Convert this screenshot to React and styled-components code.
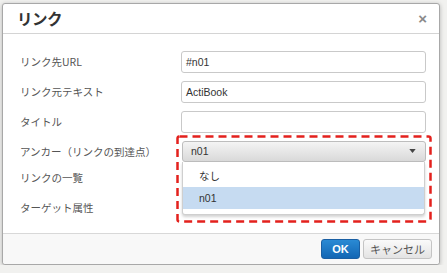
import styled, { createGlobalStyle } from "styled-components";

const GlobalStyle = createGlobalStyle`
  html, body {
    margin: 0;
    padding: 0;
    background: #f1f1ef;
  }
  body {
    font-family: "Liberation Sans", "Noto Sans CJK JP", sans-serif;
  }
`;

function App() {
  return (
    <>
      <GlobalStyle />
      <Dialog>
        <Header>
          <Title>リンク</Title>
          <Close>×</Close>
        </Header>
        <Body>
          <Row>
            <Label>リンク先URL</Label>
            <TextInput>#n01</TextInput>
          </Row>
          <Row>
            <Label>リンク元テキスト</Label>
            <TextInput>ActiBook</TextInput>
          </Row>
          <Row>
            <Label>タイトル</Label>
            <TextInput />
          </Row>
          <Row>
            <Label>アンカー（リンクの到達点）</Label>
            <SelectWrap>
              <Select>
                n01
                <Caret viewBox="0 0 8 5" width="7" height="4">
                  <path d="M0 0 L8 0 L4 5 Z" fill="#444" />
                </Caret>
              </Select>
              <Menu>
                <Option>なし</Option>
                <Option $active>n01</Option>
              </Menu>
              <Highlight width="256" height="88" viewBox="0 0 256 88">
                <rect
                  x="1.5"
                  y="1.5"
                  width="253"
                  height="85"
                  rx="2"
                  fill="none"
                  stroke="#e3211d"
                  strokeWidth="2.5"
                  strokeDasharray="8 5"
                />
              </Highlight>
            </SelectWrap>
          </Row>
          <Row $top>
            <Label $top>リンクの一覧</Label>
            <Blank />
          </Row>
          <Row $top>
            <Label $top>ターゲット属性</Label>
            <Blank />
          </Row>
        </Body>
        <Footer>
          <Button $primary>OK</Button>
          <Button>キャンセル</Button>
        </Footer>
      </Dialog>
    </>
  );
}

const Dialog = styled.div`
  box-sizing: border-box;
  width: 438px;
  height: 262px;
  margin: 3px 0 0 2px;
  background: #fff;
  border: 1px solid #a8a8a8;
  border-radius: 3px;
  box-shadow: 0 1px 4px rgba(0, 0, 0, 0.25);
  display: flex;
  flex-direction: column;
`;

const Header = styled.div`
  height: 29px;
  padding: 0 12px 0 14px;
  display: flex;
  align-items: center;
  justify-content: space-between;
  border-bottom: 1px solid #d4d4d4;
`;

const Title = styled.div`
  font-family: "Noto Sans CJK JP", sans-serif;
  font-size: 15.5px;
  font-weight: 700;
  color: #333;
  letter-spacing: -0.5px;
`;

const Close = styled.div`
  font-family: "Liberation Sans", sans-serif;
  font-size: 15px;
  font-weight: 700;
  color: #8a8a8a;
  line-height: 1;
`;

const Body = styled.div`
  flex: 1;
  padding: 17px 13px 0 17px;
  display: flex;
  flex-direction: column;
  gap: 8px;
`;

const Row = styled.div`
  display: grid;
  grid-template-columns: 161px 1fr;
  align-items: ${(p) => (p.$top ? "start" : "center")};
  height: 22px;
`;

const Label = styled.div`
  font-family: "Noto Sans CJK JP", sans-serif;
  font-size: 10.5px;
  line-height: ${(p) => (p.$top ? "13px" : "16px")};
  color: #555;
  white-space: nowrap;
`;

const TextInput = styled.div`
  box-sizing: border-box;
  height: 22px;
  border: 1px solid #c9c9c9;
  border-radius: 3px;
  padding: 0 4px;
  font-family: "Liberation Sans", sans-serif;
  font-size: 10.5px;
  line-height: 20px;
  color: #333;
  background: #fff;
`;

const SelectWrap = styled.div`
  position: relative;
  height: 22px;
`;

const Select = styled.div`
  box-sizing: border-box;
  height: 21px;
  margin-left: 1px;
  border: 1px solid #bdbdbd;
  border-radius: 3px;
  background: linear-gradient(#f4f4f4, #d9d9d9);
  padding: 0 9px 0 8px;
  display: flex;
  align-items: center;
  justify-content: space-between;
  font-family: "Liberation Sans", sans-serif;
  font-size: 10.5px;
  color: #333;
`;

const Caret = styled.svg`
  display: block;
`;

const Menu = styled.div`
  position: absolute;
  top: 21px;
  left: 1px;
  right: 1px;
  box-sizing: border-box;
  padding: 3px 0 5px;
  background: #fff;
  border: 1px solid #cfcfcf;
  border-top: none;
  border-radius: 0 0 3px 3px;
  box-shadow: 0 2px 3px rgba(0, 0, 0, 0.18);
  z-index: 2;
`;

const Option = styled.div`
  height: 22px;
  line-height: 22px;
  padding-left: 16px;
  font-family: "Liberation Sans", "Noto Sans CJK JP", sans-serif;
  font-size: 10.5px;
  color: #333;
  background: ${(p) => (p.$active ? "#c6dbf1" : "transparent")};
`;

const Highlight = styled.svg`
  position: absolute;
  top: -6px;
  left: -5px;
  z-index: 3;
  pointer-events: none;
`;

const Blank = styled.div`
  height: 22px;
`;

const Footer = styled.div`
  height: 31px;
  margin-top: 10px;
  border-top: 1px solid #d8d8d8;
  background: #f8f8f8;
  border-radius: 0 0 3px 3px;
  display: flex;
  align-items: center;
  justify-content: flex-end;
  gap: 3px;
  padding-right: 7px;
`;

const Button = styled.div`
  box-sizing: border-box;
  height: 20px;
  padding: 0 ${(p) => (p.$primary ? "10px" : "6px")};
  min-width: ${(p) => (p.$primary ? "39px" : "69px")};
  border-radius: 3px;
  display: flex;
  align-items: center;
  justify-content: center;
  font-family: "Liberation Sans", "Noto Sans CJK JP", sans-serif;
  font-size: 11px;
  font-weight: ${(p) => (p.$primary ? 700 : 400)};
  color: ${(p) => (p.$primary ? "#fff" : "#555")};
  background: ${(p) =>
    p.$primary
      ? "linear-gradient(#2a8ad4, #1266b4)"
      : "linear-gradient(#fafafa, #e3e3e3)"};
  border: 1px solid ${(p) => (p.$primary ? "#1a5fa3" : "#c4c4c4")};
`;

export default App;
